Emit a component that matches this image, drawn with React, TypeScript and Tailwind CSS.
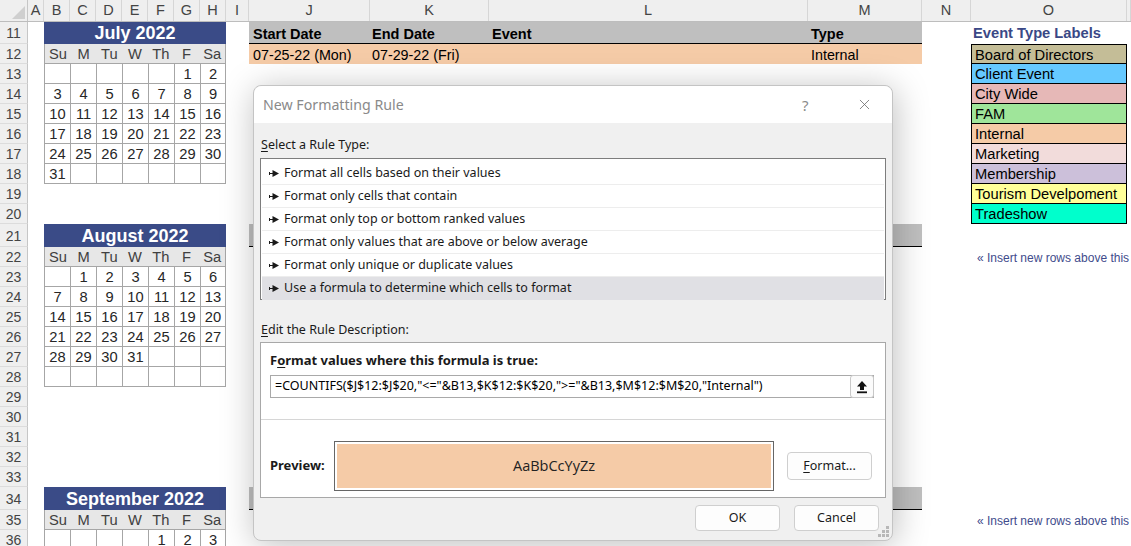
import React from "react";
import { X } from "lucide-react";

type Cal =
  | { t: "title"; text: string }
  | { t: "days" }
  | { t: "week"; d: (number | "")[] }
  | null;
type Tab = "head" | "headblank" | "data" | null;
type OCell =
  | { t: "title" }
  | { t: "label"; name: string; bg: string; first?: boolean }
  | { t: "insert" }
  | null;

interface RowDef {
  n: number;
  h: string;
  cal: Cal;
  tab: Tab;
  o: OCell;
}

const colHeads = [
  { l: "A", w: "w-[16px]" },
  { l: "B", w: "w-[26px]" },
  { l: "C", w: "w-[26px]" },
  { l: "D", w: "w-[26px]" },
  { l: "E", w: "w-[26px]" },
  { l: "F", w: "w-[26px]" },
  { l: "G", w: "w-[26px]" },
  { l: "H", w: "w-[26px]" },
  { l: "I", w: "w-[23px]" },
  { l: "J", w: "w-[121px]" },
  { l: "K", w: "w-[119px]" },
  { l: "L", w: "w-[319px]" },
  { l: "M", w: "w-[114px]" },
  { l: "N", w: "w-[49px]" },
  { l: "O", w: "w-[156px]" },
  { l: "", w: "w-[4px]" },
];

const E = "" as const;

const rows: RowDef[] = [
  { n: 11, h: "h-[22px]", cal: { t: "title", text: "July 2022" }, tab: "head", o: { t: "title" } },
  { n: 12, h: "h-[20px]", cal: { t: "days" }, tab: "data", o: { t: "label", name: "Board of Directors", bg: "bg-[#c4bd97]", first: true } },
  { n: 13, h: "h-[20px]", cal: { t: "week", d: [E, E, E, E, E, 1, 2] }, tab: null, o: { t: "label", name: "Client Event", bg: "bg-[#66c9ff]" } },
  { n: 14, h: "h-[20px]", cal: { t: "week", d: [3, 4, 5, 6, 7, 8, 9] }, tab: null, o: { t: "label", name: "City Wide", bg: "bg-[#e6b8b7]" } },
  { n: 15, h: "h-[20px]", cal: { t: "week", d: [10, 11, 12, 13, 14, 15, 16] }, tab: null, o: { t: "label", name: "FAM", bg: "bg-[#9fe59a]" } },
  { n: 16, h: "h-[20px]", cal: { t: "week", d: [17, 18, 19, 20, 21, 22, 23] }, tab: null, o: { t: "label", name: "Internal", bg: "bg-[#f5cba7]" } },
  { n: 17, h: "h-[20px]", cal: { t: "week", d: [24, 25, 26, 27, 28, 29, 30] }, tab: null, o: { t: "label", name: "Marketing", bg: "bg-[#f2dcdb]" } },
  { n: 18, h: "h-[20px]", cal: { t: "week", d: [31, E, E, E, E, E, E] }, tab: null, o: { t: "label", name: "Membership", bg: "bg-[#ccc0da]" } },
  { n: 19, h: "h-[20px]", cal: null, tab: null, o: { t: "label", name: "Tourism Develpoment", bg: "bg-[#ffff99]" } },
  { n: 20, h: "h-[20px]", cal: null, tab: null, o: { t: "label", name: "Tradeshow", bg: "bg-[#00ffcc]" } },
  { n: 21, h: "h-[23px]", cal: { t: "title", text: "August 2022" }, tab: "headblank", o: null },
  { n: 22, h: "h-[20px]", cal: { t: "days" }, tab: null, o: { t: "insert" } },
  { n: 23, h: "h-[20px]", cal: { t: "week", d: [E, 1, 2, 3, 4, 5, 6] }, tab: null, o: null },
  { n: 24, h: "h-[20px]", cal: { t: "week", d: [7, 8, 9, 10, 11, 12, 13] }, tab: null, o: null },
  { n: 25, h: "h-[20px]", cal: { t: "week", d: [14, 15, 16, 17, 18, 19, 20] }, tab: null, o: null },
  { n: 26, h: "h-[20px]", cal: { t: "week", d: [21, 22, 23, 24, 25, 26, 27] }, tab: null, o: null },
  { n: 27, h: "h-[20px]", cal: { t: "week", d: [28, 29, 30, 31, E, E, E] }, tab: null, o: null },
  { n: 28, h: "h-[20px]", cal: { t: "week", d: [E, E, E, E, E, E, E] }, tab: null, o: null },
  { n: 29, h: "h-[20px]", cal: null, tab: null, o: null },
  { n: 30, h: "h-[20px]", cal: null, tab: null, o: null },
  { n: 31, h: "h-[20px]", cal: null, tab: null, o: null },
  { n: 32, h: "h-[20px]", cal: null, tab: null, o: null },
  { n: 33, h: "h-[20px]", cal: null, tab: null, o: null },
  { n: 34, h: "h-[23px]", cal: { t: "title", text: "September 2022" }, tab: "headblank", o: null },
  { n: 35, h: "h-[20px]", cal: { t: "days" }, tab: null, o: { t: "insert" } },
  { n: 36, h: "h-[20px]", cal: { t: "week", d: [E, E, E, E, 1, 2, 3] }, tab: null, o: null },
];

const dayNames = ["Su", "M", "Tu", "W", "Th", "F", "Sa"];

function CalSeg({ cal }: { cal: Cal }) {
  if (!cal) return <div className="w-[182px] h-full" />;
  if (cal.t === "title")
    return (
      <div className="w-[182px] h-full bg-[#3a4b87] text-white font-bold text-[18px] flex items-center justify-center pt-[1px]">
        {cal.text}
      </div>
    );
  if (cal.t === "days")
    return (
      <div className="w-[182px] h-full flex bg-[#e7e7e7] border-l border-r border-b border-[#a6a6a6] text-[#404040] text-[14.7px]">
        {dayNames.map((d) => (
          <div key={d} className="flex-1 flex items-center justify-center pt-[2px]">
            {d}
          </div>
        ))}
      </div>
    );
  return (
    <div className="w-[182px] h-full flex text-[14.7px] text-[#262626]">
      {cal.d.map((v, i) => (
        <div
          key={i}
          className={`w-[26px] h-full flex items-center justify-center pt-[2px] border-l border-b border-[#a6a6a6] ${
            i === 6 ? "border-r" : ""
          }`}
        >
          {v}
        </div>
      ))}
    </div>
  );
}

function TabSeg({ tab }: { tab: Tab }) {
  if (tab === "head" || tab === "headblank")
    return (
      <div className="w-[673px] h-full flex bg-[#bfbfbf] border-b border-black font-bold text-[14.5px] text-black">
        {tab === "head" && (
          <>
            <div className="w-[121px] pl-[4px] pt-[5px] flex items-center">Start Date</div>
            <div className="w-[119px] pl-[2px] pt-[5px] flex items-center">End Date</div>
            <div className="w-[319px] pl-[3px] pt-[5px] flex items-center">Event</div>
            <div className="w-[114px] pl-[3px] pt-[5px] flex items-center">Type</div>
          </>
        )}
      </div>
    );
  if (tab === "data")
    return (
      <div className="w-[673px] h-full flex bg-[#f5cba7] text-[14.3px] text-black">
        <div className="w-[121px] pl-[4px] pt-[3px] flex items-center">07-25-22 (Mon)</div>
        <div className="w-[119px] pl-[2px] pt-[3px] flex items-center">07-29-22 (Fri)</div>
        <div className="w-[319px]" />
        <div className="w-[114px] pl-[3px] pt-[3px] flex items-center">Internal</div>
      </div>
    );
  return <div className="w-[673px] h-full" />;
}

function OSeg({ o }: { o: OCell }) {
  if (!o) return <div className="w-[156px] h-full" />;
  if (o.t === "title")
    return (
      <div className="w-[156px] h-full flex items-center pl-[2px] font-bold text-[14.7px] text-[#3a4886] whitespace-nowrap">
        Event Type Labels
      </div>
    );
  if (o.t === "insert")
    return (
      <div className="w-[156px] h-full flex items-center pl-[6px] pt-[1px] text-[12px] text-[#3f4c8c] whitespace-nowrap">
        « Insert new rows above this
      </div>
    );
  return (
    <div
      className={`w-[156px] h-full flex items-center pl-[3px] pt-[2px] text-[14.7px] text-black border-l border-r border-b border-black whitespace-nowrap ${
        o.bg
      } ${o.first ? "border-t" : ""}`}
    >
      {o.name}
    </div>
  );
}

function SheetRow({ r }: { r: RowDef }) {
  return (
    <div className={`flex ${r.h}`}>
      <div className="w-[28px] h-full bg-[#efefef] border-r border-b border-[#c6c6c6] border-b-[#dcdcdc] flex items-center justify-center pt-[2px] text-[14px] text-[#444]">
        {r.n}
      </div>
      <div className="w-[16px] h-full" />
      <CalSeg cal={r.cal} />
      <div className="w-[23px] h-full" />
      <TabSeg tab={r.tab} />
      <div className="w-[49px] h-full" />
      <OSeg o={r.o} />
      <div className="w-[4px] h-full" />
    </div>
  );
}

function HeaderRow() {
  return (
    <div className="flex h-[22px] bg-[#efefef] border-b border-[#bdbdbd]">
      <div className="w-[28px] h-full border-r border-[#c6c6c6] relative">
        <svg className="absolute right-[2px] bottom-[2px]" width="13" height="13" viewBox="0 0 13 13">
          <path d="M13 0 L13 13 L0 13 Z" fill="#cfcfcf" />
        </svg>
      </div>
      {colHeads.map((c, i) => (
        <div
          key={i}
          className={`${c.w} h-full flex items-center justify-center pt-[1px] text-[14.5px] text-[#444] border-r border-[#d6d6d6] overflow-hidden`}
        >
          {c.l}
        </div>
      ))}
    </div>
  );
}

function ListArrow() {
  return (
    <svg width="11" height="7" viewBox="0 0 11 7" className="shrink-0">
      <rect x="0" y="2" width="1" height="3" fill="#1a1a1a" />
      <rect x="0" y="3" width="4" height="1" fill="#1a1a1a" />
      <path d="M3.5 0 L10 3.5 L3.5 7 Z" fill="#1a1a1a" />
    </svg>
  );
}

const ruleTypes = [
  "Format all cells based on their values",
  "Format only cells that contain",
  "Format only top or bottom ranked values",
  "Format only values that are above or below average",
  "Format only unique or duplicate values",
  "Use a formula to determine which cells to format",
];

function Dialog() {
  return (
    <div className="absolute left-[253px] top-[85px] w-[640px] h-[456px] rounded-[8px] border border-[#c4c4c4] bg-[#f0f0f0] shadow-[2px_4px_34px_rgba(0,0,0,0.26)] font-['Noto_Sans',sans-serif] text-[12.5px] text-[#1a1a1a] flex flex-col">
      <div className="h-[37px] bg-white rounded-t-[8px] flex items-center pl-[9px] relative">
        <span className="text-[14.2px] text-[#8a8a8a]">New Formatting Rule</span>
        <span className="absolute left-[548px] top-[8px] text-[15px] text-[#8a8a8a]">?</span>
        <X className="absolute left-[602px] top-[10px]" size={17} strokeWidth={1.1} color="#666" />
      </div>
      <div className="px-[6px] flex flex-col">
        <div className="mt-[14px] h-[16px] leading-[16px] pl-[1px]">
          <span className="underline underline-offset-2">S</span>elect a Rule Type:
        </div>
        <div className="mt-[5px] h-[142px] border border-[#7d7d7d] bg-white pt-[3px] px-[1px] flex flex-col">
          {ruleTypes.map((t, i) => (
            <div
              key={t}
              className={`h-[23px] shrink-0 flex items-center gap-[4px] pl-[7px] ${
                i === 5 ? "bg-[#e0e0e4]" : "border-b border-[#ededed]"
              }`}
            >
              <ListArrow />
              <span>{t}</span>
            </div>
          ))}
        </div>
        <div className="mt-[22px] h-[16px] leading-[16px] pl-[1px]">
          <span className="underline underline-offset-2">E</span>dit the Rule Description:
        </div>
        <div className="mt-[4px] h-[156px] border border-[#a8a8a8] bg-white flex flex-col">
          <div className="pt-[9px] pl-[9px] pr-[12px]">
            <div className="h-[16px] leading-[16px] font-bold text-[13px]">
              F<span className="underline underline-offset-2">o</span>rmat values where this formula is true:
            </div>
            <div className="mt-[7px] h-[23px] w-[604px] border border-[#a9a9a9] bg-white flex items-center relative">
              <span className="pl-[4px] whitespace-nowrap text-black">
                =COUNTIFS($J$12:$J$20,"&lt;="&amp;B13,$K$12:$K$20,"&gt;="&amp;B13,$M$12:$M$20,"Internal")
              </span>
              <div className="absolute right-[-1px] top-[-1px] w-[24px] h-[23px] rounded-[3px] border border-[#c8c8c8] bg-[#fbfbfb] flex items-center justify-center">
                <svg width="12" height="14" viewBox="0 0 12 14">
                  <path d="M6 1 L11 6.5 H8 V10 H4 V6.5 H1 Z" fill="#111" />
                  <rect x="1" y="11.4" width="10" height="1.8" fill="#111" />
                </svg>
              </div>
            </div>
          </div>
          <div className="mt-[21px] h-px bg-[#d6d6d6]" />
          <div className="mt-[21px] h-[50px] flex items-center pl-[9px]">
            <div className="w-[64px] font-bold text-[13px]">Preview:</div>
            <div className="w-[440px] h-[50px] border border-[#666] bg-white p-[2px]">
              <div className="w-full h-full bg-[#f5cba7] flex items-center justify-center text-[14.5px] text-[#222] font-['Open_Sans',sans-serif]">
                AaBbCcYyZz
              </div>
            </div>
            <div className="ml-[13px] w-[85px] h-[28px] rounded-[4px] border border-[#cfcfcf] bg-[#fdfdfd] flex items-center justify-center">
              <span>
                <span className="underline underline-offset-2">F</span>ormat...
              </span>
            </div>
          </div>
        </div>
        <div className="mt-[7px] flex justify-end gap-[14px] pr-[7px]">
          <div className="w-[85px] h-[26px] rounded-[4px] border border-[#cfcfcf] bg-[#fdfdfd] flex items-center justify-center">
            OK
          </div>
          <div className="w-[85px] h-[26px] rounded-[4px] border border-[#cfcfcf] bg-[#fdfdfd] flex items-center justify-center">
            Cancel
          </div>
        </div>
      </div>
      <svg className="absolute right-[3px] bottom-[3px]" width="11" height="11" viewBox="0 0 11 11">
        <rect x="8" y="0" width="3" height="3" fill="#b8b8b8" />
        <rect x="4" y="4" width="3" height="3" fill="#b8b8b8" />
        <rect x="8" y="4" width="3" height="3" fill="#b8b8b8" />
        <rect x="0" y="8" width="3" height="3" fill="#b8b8b8" />
        <rect x="4" y="8" width="3" height="3" fill="#b8b8b8" />
        <rect x="8" y="8" width="3" height="3" fill="#b8b8b8" />
      </svg>
    </div>
  );
}

export default function App() {
  return (
    <div className="relative w-[1131px] h-[546px] overflow-hidden bg-white font-['Liberation_Sans',Arial,sans-serif]">
      <HeaderRow />
      {rows.map((r) => (
        <SheetRow key={r.n} r={r} />
      ))}
      <Dialog />
    </div>
  );
}
